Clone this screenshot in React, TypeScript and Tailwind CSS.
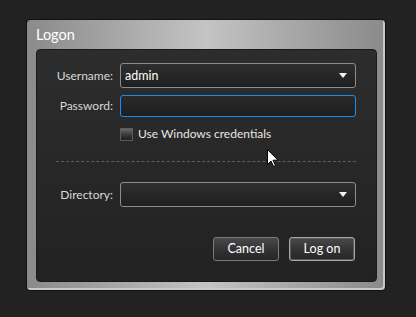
import React from "react";

const font = { fontFamily: "Lato, 'Open Sans', sans-serif" };

const Combo = ({ value }: { value?: string }) => (
  <div className="flex h-[25px] w-[236px] items-center justify-between rounded-[3px] border border-[#8c8c8c] bg-gradient-to-b from-[#2f2f2f] to-[#1f1f1f] pl-[4px] pr-[8px]">
    <span className="text-[12.5px] text-white">{value}</span>
    <svg width="8" height="5" viewBox="0 0 8 5">
      <path d="M0 0h8L4 5z" fill="#f2f2f2" />
    </svg>
  </div>
);

const Btn = ({ label, active }: { label: string; active?: boolean }) => (
  <div
    className={
      "flex h-[24px] w-[66px] items-center justify-center rounded-[3px] border bg-gradient-to-b from-[#4a4a4a] via-[#343434] to-[#262626] text-[12.5px] text-white " +
      (active ? "border-[#a8a8a8] shadow-[inset_0_0_0_1px_#5a5a5a]" : "border-[#7a7a7a]")
    }
  >
    {label}
  </div>
);

export default function App() {
  return (
    <div className="relative h-[317px] w-[416px] bg-[#222222] pl-[26px] pt-[19px]" style={font}>
      {/* outer silver frame */}
      <div className="w-[360px] rounded-[4px] border border-[#121212] bg-gradient-to-r from-[#8a8a8a] via-[#c4c4c4] to-[#8a8a8a] pb-[8px] pl-[9px] pr-[7px] shadow-[inset_-2px_-2px_0_0_#c8c8c8]">
        <div className="flex h-[29px] items-center pt-[1px] text-[14.5px] text-white">Logon</div>

        {/* inner panel */}
        <div className="h-[233px] w-[341px] rounded-[4px] border border-[#1a1a1a] bg-gradient-to-b from-[#2d2d2d] to-[#222222] pt-[13px] text-[12px] leading-[18px]">
          <div className="flex items-center">
            <div className="w-[76px] text-right text-[#d8d8d8]">Username:</div>
            <div className="ml-[7px]">
              <Combo value="admin" />
            </div>
          </div>

          <div className="mt-[7px] flex items-center">
            <div className="w-[76px] text-right text-[#d8d8d8]">Password:</div>
            <div className="ml-[7px] h-[22px] w-[236px] rounded-[3px] border border-[#1a8ef0] bg-gradient-to-b from-[#2a2a2a] to-[#1e1e1e]" />
          </div>

          <div className="ml-[83px] mt-[8px] flex items-center">
            <div className="h-[13px] w-[13px] border border-[#5c5c5c] bg-gradient-to-b from-[#6a6a6a] via-[#3a3a3a] to-[#1e1e1e]" />
            <span className="ml-[5px] text-[12px] text-[#e6e6e6]">Use Windows credentials</span>
          </div>

          <div className="ml-[19px] mt-[18px] w-[300px] border-t border-dashed border-[#5e5e5e]" />

          <div className="mt-[20px] flex items-center">
            <div className="w-[76px] text-right text-[#d8d8d8]">Directory:</div>
            <div className="ml-[7px]">
              <Combo />
            </div>
          </div>

          <div className="ml-[176px] mt-[30px] flex gap-[10px]">
            <Btn label="Cancel" />
            <Btn label="Log on" active />
          </div>
        </div>
      </div>

      {/* mouse pointer */}
      <svg className="absolute left-[267px] top-[149px]" width="12" height="18" viewBox="0 0 12 18">
        <path d="M0.5 0.5v15l3.5-3.5 2.5 5.5 2-1-2.5-5.3h5z" fill="#fff" stroke="#000" strokeWidth="1" />
      </svg>
    </div>
  );
}
